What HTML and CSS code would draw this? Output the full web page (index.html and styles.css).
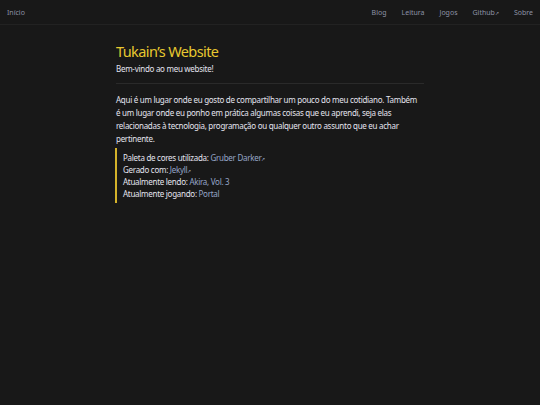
FILE: index.html
```html
<!DOCTYPE html>
<html>
<head>
  <title>Tukain's Website</title>
  <link rel="stylesheet" href="styles.css">
</head>
<body>

  <header class="topo">
    <a href="#" class="inicio">Início</a>
    <nav class="menu">
      <a href="#">Blog</a>
      <a href="#">Leitura</a>
      <a href="#">Jogos</a>
      <a href="#">Github<span class="ext">↗</span></a>
      <a href="#">Sobre</a>
    </nav>
  </header>

  <main class="conteudo">
    <h1>Tukain’s Website</h1>
    <p class="sub">Bem-vindo ao meu website!</p>
    <hr>
    <p>Aqui é um lugar onde eu gosto de compartilhar um pouco do meu cotidiano. Também é um lugar onde eu ponho em prática algumas coisas que eu aprendi, seja elas relacionadas à tecnologia, programação ou qualquer outro assunto que eu achar pertinente.</p>

    <blockquote>
      Paleta de cores utilizada: <a href="#">Gruber Darker<span class="ext">↗</span></a><br>
      Gerado com: <a href="#">Jekyll<span class="ext">↗</span></a><br>
      Atualmente lendo: <a href="#">Akira, Vol. 3</a><br>
      Atualmente jogando: <a href="#">Portal</a>
    </blockquote>
  </main>

</body>
</html>
```
FILE: styles.css
```css
body {
  margin: 0;
  background: #181818;
  color: #e4e4ef;
  font-family: "Noto Sans", sans-serif;
  font-size: 8px;
  letter-spacing: -0.28px;
}
a {
  color: #96a6c8;
  text-decoration: none;
}
.ext {
  font-size: 5px;
  line-height: 1;
}
.topo {
  display: flex;
  justify-content: space-between;
  align-items: center;
  height: 24px;
  padding: 0 7px;
  border-bottom: 1px solid #222;
}
.topo a {
  color: #8d93a6;
  font-size: 7px;
  letter-spacing: 0;
}
.menu {
  display: flex;
  gap: 15px;
}
.conteudo {
  width: 304px;
  margin: 0 auto;
  padding: 16px 8px 0 4px;
}
h1 {
  color: #e8c830;
  font-weight: normal;
  font-size: 14.5px;
  letter-spacing: -0.6px;
  margin: 0 0 1px;
}
.sub {
  margin: 0;
}
hr {
  border: 0;
  border-top: 1px solid #2a2a2a;
  margin: 8px 0 9px;
  width: 308px;
}
p {
  line-height: 13px;
  margin: 0;
}
blockquote {
  margin: 3px 0 0 -1px;
  padding: 4px 0 3px 6px;
  border-left: 2px solid #d4b22a;
  line-height: 12px;
}
```
